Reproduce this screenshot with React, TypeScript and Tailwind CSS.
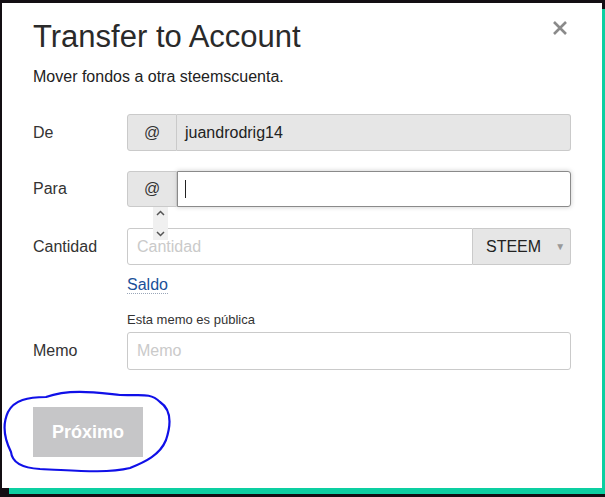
import React from "react";

const font = { fontFamily: '"Liberation Sans", Arial, sans-serif' };

function Label({ children }: { children: React.ReactNode }) {
  return <div className="w-[94px] shrink-0 text-[16px] text-[#333]">{children}</div>;
}

function Addon() {
  return (
    <div className="flex h-full w-[50px] shrink-0 items-center justify-center rounded-l-[3px] border border-[#cacaca] bg-[#e6e6e6] text-[16px] text-[#333]">
      @
    </div>
  );
}

export default function App() {
  return (
    <div className="relative h-[497px] w-[605px] overflow-hidden bg-[#130e13]" style={font}>
      <div className="ml-[2px] mt-[3px] h-[485px] w-[600px] bg-white px-[31px] pt-[16px] shadow-[7px_6px_0_#0ccfa1]">
        <div className="flex items-start justify-between">
          <h1 className="text-[31px] leading-[36px] text-[#2a2a2a]">Transfer to Account</h1>
          <button className="mr-[3px] mt-[1px] text-[#8a8a8a]" aria-label="close">
            <svg width="16" height="16" viewBox="0 0 16 16">
              <path d="M2 2 L14 14 M14 2 L2 14" stroke="#8a8a8a" strokeWidth="2.6" />
            </svg>
          </button>
        </div>
        <p className="mt-[12px] text-[16px] leading-[20px] text-[#222]">Mover fondos a otra steemscuenta.</p>

        {/* De */}
        <div className="mt-[27px] flex h-[37px] items-center">
          <Label>De</Label>
          <div className="flex h-full flex-1">
            <Addon />
            <div className="flex flex-1 items-center rounded-r-[3px] border border-l-0 border-[#cacaca] bg-[#e6e6e6] pl-[8px] text-[16px] text-[#222]">
              juandrodrig14
            </div>
          </div>
        </div>

        {/* Para */}
        <div className="mt-[20px] flex h-[36px] items-center">
          <Label>Para</Label>
          <div className="relative flex h-full flex-1">
            <Addon />
            <div className="flex flex-1 items-center rounded-r-[3px] border border-[#8a8a8a] bg-white pl-[7px] shadow-[0_0_5px_#cacaca]">
              <div className="h-[18px] w-[1px] bg-[#222]" />
            </div>
            <div className="absolute left-[26px] top-[36px] flex h-[33px] w-[15px] flex-col items-center justify-between bg-[#f0f0f0] py-[3px]">
              <svg width="9" height="6" viewBox="0 0 9 6">
                <path d="M1 5 L4.5 1.5 L8 5" fill="none" stroke="#555" strokeWidth="1.5" />
              </svg>
              <svg width="9" height="6" viewBox="0 0 9 6">
                <path d="M1 1 L4.5 4.5 L8 1" fill="none" stroke="#555" strokeWidth="1.5" />
              </svg>
            </div>
          </div>
        </div>

        {/* Cantidad */}
        <div className="mt-[21px] flex h-[37px] items-center">
          <Label>Cantidad</Label>
          <div className="flex h-full flex-1">
            <div className="flex flex-1 items-center rounded-l-[3px] border border-[#cacaca] bg-white pl-[9px] text-[16px] text-[#cacaca]">
              Cantidad
            </div>
            <div className="flex w-[98px] items-center rounded-r-[3px] border border-l-0 border-[#cacaca] bg-[#e6e6e6] pl-[13px] text-[16px] text-[#222]">
              STEEM
              <span className="ml-[14px] text-[10px] text-[#999]">▼</span>
            </div>
          </div>
        </div>

        {/* Saldo */}
        <div className="mt-[8px] pl-[94px]">
          <span className="border-b border-dotted border-[#9aa6b8] text-[16px] leading-[20px] text-[#1a5099]">Saldo</span>
        </div>

        {/* Memo */}
        <div className="mt-[15px] flex items-end">
          <div className="flex h-[38px] items-center">
            <Label>Memo</Label>
          </div>
          <div className="flex flex-1 flex-col">
            <div className="text-[13px] leading-[16px] text-[#333]">Esta memo es pública</div>
            <div className="mt-[4px] flex h-[38px] items-center rounded-[3px] border border-[#cacaca] bg-white pl-[9px] text-[16px] text-[#cacaca]">
              Memo
            </div>
          </div>
        </div>

        <button className="mt-[37px] flex h-[50px] w-[110px] items-center justify-center bg-[#c6c6c8] text-[18px] font-bold text-white">
          Próximo
        </button>
      </div>

      <svg className="pointer-events-none absolute left-0 top-0" width="605" height="497" viewBox="0 0 605 497">
        <path
          d="M46 397 C70 388 100 393 120 395 C140 396 150 392 160 402 C172 410 171 425 166 440 C160 455 145 462 130 468 C105 474 70 470 40 469 C22 468 12 462 11 452 C5 440 2 425 8 412 C14 400 28 397 46 397 Z"
          fill="none"
          stroke="#1010e8"
          strokeWidth="2.2"
        />
      </svg>
    </div>
  );
}
